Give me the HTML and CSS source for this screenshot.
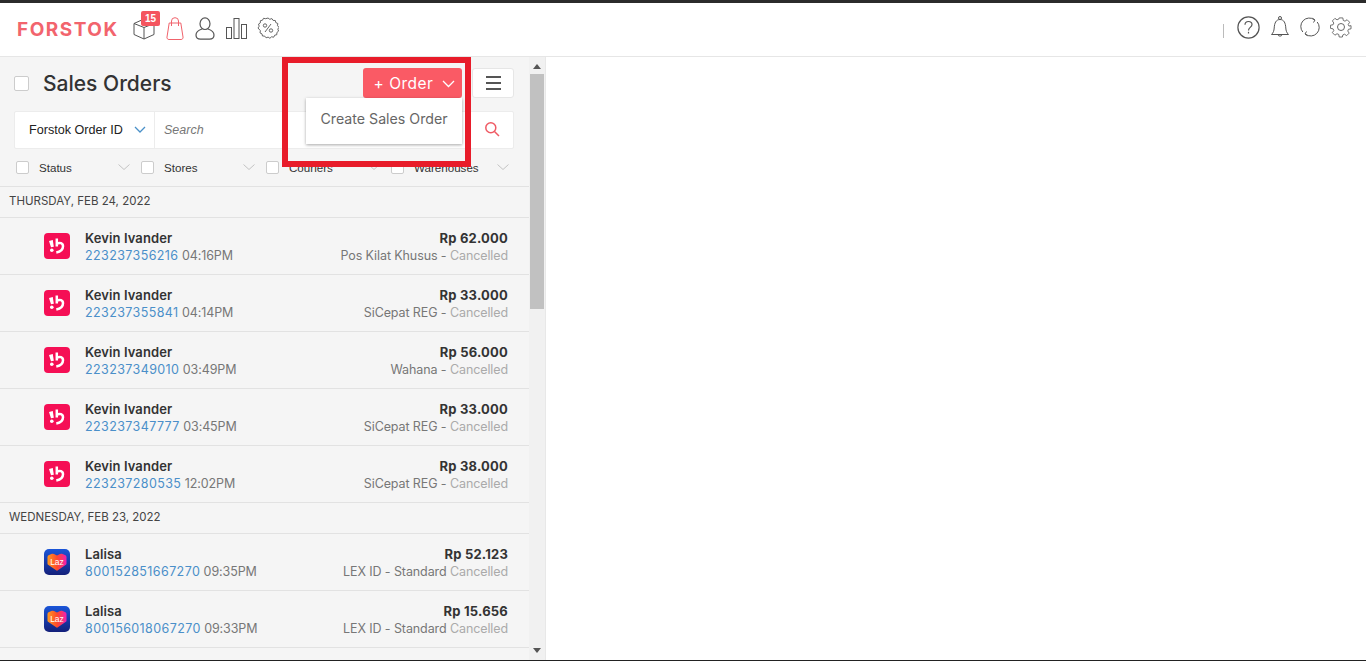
FILE: index.html
```html
<!DOCTYPE html>
<html lang="en">
<head>
<meta charset="utf-8">
<title>Forstok Sales Orders</title>
<link rel="stylesheet" href="styles.css">
</head>
<body>
<div class="page">
  <header class="topbar">
    <div class="brand">FORSTOK</div>
    <nav class="nav-left">
      <span class="nav-icon box-icon">
        <svg width="22" height="23" viewBox="0 0 22 23" fill="none" stroke="#555" stroke-width="1" stroke-linejoin="round"><path d="M1 6.500 11 2l10 4.500v11L11 22 1 17.500Z"/><path d="M1 6.500 11 10.500 21 6.500M11 10.500V22"/></svg>
        <span class="badge">15</span>
      </span>
      <svg class="nav-icon" width="18" height="23" viewBox="0 0 18 23" fill="none" stroke="#f0636c" stroke-width="1" stroke-linejoin="round"><path d="M3.200 6h11.600L17 20a2 2 0 0 1-2 2.500H3A2 2 0 0 1 1 20Z"/><path d="M5.500 9V4a3.500 3.300 0 0 1 7 0v5"/></svg>
      <svg class="nav-icon" width="20" height="23" viewBox="0 0 20 23" fill="none" stroke="#555" stroke-width="1.200"><ellipse cx="10" cy="6.700" rx="5" ry="5.800"/><path d="M7 12C2.500 13.500 1 15.500 1 18c0 2.700 1.800 4.200 4.500 4.200h9c2.700 0 4.500-1.500 4.500-4.200 0-2.500-1.500-4.500-6-6"/></svg>
      <svg class="nav-icon" width="21" height="21" viewBox="0 0 21 21" fill="none" stroke="#555" stroke-width="1"><rect x=".5" y="9.500" width="5" height="11"/><rect x="8" y=".5" width="5" height="20"/><rect x="15.500" y="6.500" width="5" height="14"/></svg>
      <svg class="nav-icon percent" width="22" height="22" viewBox="0 0 22 22" fill="none" stroke="#555" stroke-width=".9"><path d="M11 1l1.800 1.300 2.100-.7 1.200 1.800 2.200.1.500 2.100 2 .9-.3 2.200 1.500 1.600-1.200 1.800.8 2-1.700 1.400-.1 2.200-2.100.5-1 2-2.200-.4-1.600 1.500-1.800-1.200-2 .7-1.400-1.700-2.200-.1-.5-2.100-2-1 .4-2.200L1 11l1.200-1.800-.7-2.100 1.800-1.200.1-2.200 2.100-.5 1-1.900 2.200.4Z"/><path d="M14 7 8 15"/><circle cx="8" cy="8.500" r="1.700"/><circle cx="14" cy="13.500" r="1.700"/></svg>
    </nav>
    <div class="nav-right">
      <span class="divider"></span>
      <svg width="23" height="23" viewBox="0 0 23 23" fill="none" stroke="#555" stroke-width="1.200"><circle cx="11.500" cy="11.500" r="10.600"/><path d="M8 8.800C8 6.800 9.500 5.500 11.500 5.500s3.500 1.300 3.500 3.100c0 1.400-.9 2.100-1.800 2.800-1 .8-1.700 1.400-1.700 3"/><path d="M11.500 15.800v1.700"/></svg>
      <svg width="20" height="24" viewBox="0 0 20 24" fill="none" stroke="#555" stroke-width="1" stroke-linejoin="round"><path d="M1.500 19.500c1.800-1.800 2.500-3.500 2.700-6.500C4.500 8 6 4.500 10 4.500S15.500 8 15.800 13c.2 3 .9 4.700 2.700 6.500Z"/><circle cx="10" cy="3" r="1.500"/><path d="M7.800 19.500a2.300 2.300 0 0 0 4.400 0"/></svg>
      <svg width="20" height="20" viewBox="0 0 20 20" fill="none" stroke="#555" stroke-width="1"><path d="M2.800 15A8.500 8.500 0 0 1 14.500 2.800"/><path d="M17.200 5A8.500 8.500 0 0 1 5.500 17.200"/><path d="M12.500 1.300 15 3l-1.500 2.500"/><path d="M7.500 18.700 5 17l1.500-2.500"/></svg>
      <svg width="22" height="22" viewBox="0 0 22 22" fill="none" stroke="#555" stroke-width=".9"><path d="M9 1h4l.5 2.800 1.900.8 2.300-1.600 2.800 2.800-1.600 2.300.8 1.900L22 9.500v3.500l-2.800.5-.8 1.900 1.600 2.300-2.800 2.800-2.300-1.600-1.900.8L12.500 22h-3.500l-.5-2.800-1.900-.8-2.300 1.600-2.800-2.800 1.600-2.300-.8-1.900L-.5 12.500V9l2.800-.5.8-1.900L1.500 4.300 4.300 1.500l2.300 1.600 1.900-.8Z" transform="translate(1 1) scale(.91)"/><circle cx="11" cy="11" r="3.500"/></svg>
    </div>
  </header>

  <main class="content">
    <section class="panel">
      <div class="list-scroll">
        <div class="panel-head">
          <div class="title-row">
            <span class="check check-lg"></span>
            <h1>Sales Orders</h1>
            <button class="order-btn">+ Order <svg width="13" height="8" viewBox="0 0 13 8" fill="none" stroke="#fff" stroke-width="1.300"><path d="M1 1l5.500 5.500L12 1"/></svg></button>
            <button class="menu-btn"><span></span><span></span><span></span></button>
          </div>
          <div class="search-row">
            <div class="search-type">Forstok Order ID <svg width="12" height="7" viewBox="0 0 12 7" fill="none" stroke="#4a90c8" stroke-width="1.300"><path d="M1 1l5 5 5-5"/></svg></div>
            <div class="search-input">Search</div>
            <svg class="search-icon" width="16" height="16" viewBox="0 0 16 16" fill="none" stroke="#ef5a64" stroke-width="1.500"><circle cx="6.800" cy="6.800" r="5"/><path d="M10.500 10.500 15 15"/></svg>
          </div>
          <div class="filter-row">
            <div class="filter"><span class="check"></span><span class="filter-name">Status</span><svg class="chev" width="12" height="6" viewBox="0 0 12 6" fill="none" stroke="#c4c4c4"><path d="M.5.500l5.500 5 5.500-5"/></svg></div>
            <div class="filter"><span class="check"></span><span class="filter-name">Stores</span><svg class="chev" width="12" height="6" viewBox="0 0 12 6" fill="none" stroke="#c4c4c4"><path d="M.5.500l5.500 5 5.500-5"/></svg></div>
            <div class="filter"><span class="check"></span><span class="filter-name">Couriers</span><svg class="chev" width="12" height="6" viewBox="0 0 12 6" fill="none" stroke="#c4c4c4"><path d="M.5.500l5.500 5 5.500-5"/></svg></div>
            <div class="filter"><span class="check"></span><span class="filter-name">Warehouses</span><svg class="chev" width="12" height="6" viewBox="0 0 12 6" fill="none" stroke="#c4c4c4"><path d="M.5.500l5.500 5 5.500-5"/></svg></div>
          </div>
        </div>

        <div class="date-row">THURSDAY, FEB 24, 2022</div>
        <div class="order">
          <span class="logo"><svg width="26" height="26" viewBox="0 0 26 26"><rect width="26" height="26" rx="4" fill="#f50f55"/><circle cx="7.800" cy="17.200" r="1.800" fill="#fff"/><path d="M5 8l3.800-1 1 6.800-2.800.5Z" fill="#fff"/><path d="M12.800 5.500v8M12.800 10.500c3-1.300 6.200-.5 6.200 2.700 0 3.300-3.200 5.600-6.700 6.300" fill="none" stroke="#fff" stroke-width="2.500"/></svg></span>
          <div class="who"><div class="name">Kevin Ivander</div><div class="meta"><a>223237356216</a> 04:16PM</div></div>
          <div class="amount"><div class="price">Rp 62.000</div><div class="ship">Pos Kilat Khusus - <em>Cancelled</em></div></div>
        </div>
        <div class="order">
          <span class="logo"><svg width="26" height="26" viewBox="0 0 26 26"><rect width="26" height="26" rx="4" fill="#f50f55"/><circle cx="7.800" cy="17.200" r="1.800" fill="#fff"/><path d="M5 8l3.800-1 1 6.800-2.800.5Z" fill="#fff"/><path d="M12.800 5.500v8M12.800 10.500c3-1.300 6.200-.5 6.200 2.700 0 3.300-3.200 5.600-6.700 6.300" fill="none" stroke="#fff" stroke-width="2.500"/></svg></span>
          <div class="who"><div class="name">Kevin Ivander</div><div class="meta"><a>223237355841</a> 04:14PM</div></div>
          <div class="amount"><div class="price">Rp 33.000</div><div class="ship">SiCepat REG - <em>Cancelled</em></div></div>
        </div>
        <div class="order">
          <span class="logo"><svg width="26" height="26" viewBox="0 0 26 26"><rect width="26" height="26" rx="4" fill="#f50f55"/><circle cx="7.800" cy="17.200" r="1.800" fill="#fff"/><path d="M5 8l3.800-1 1 6.800-2.800.5Z" fill="#fff"/><path d="M12.800 5.500v8M12.800 10.500c3-1.300 6.200-.5 6.200 2.700 0 3.300-3.200 5.600-6.700 6.300" fill="none" stroke="#fff" stroke-width="2.500"/></svg></span>
          <div class="who"><div class="name">Kevin Ivander</div><div class="meta"><a>223237349010</a> 03:49PM</div></div>
          <div class="amount"><div class="price">Rp 56.000</div><div class="ship">Wahana - <em>Cancelled</em></div></div>
        </div>
        <div class="order">
          <span class="logo"><svg width="26" height="26" viewBox="0 0 26 26"><rect width="26" height="26" rx="4" fill="#f50f55"/><circle cx="7.800" cy="17.200" r="1.800" fill="#fff"/><path d="M5 8l3.800-1 1 6.800-2.800.5Z" fill="#fff"/><path d="M12.800 5.500v8M12.800 10.500c3-1.300 6.200-.5 6.200 2.700 0 3.300-3.200 5.600-6.700 6.300" fill="none" stroke="#fff" stroke-width="2.500"/></svg></span>
          <div class="who"><div class="name">Kevin Ivander</div><div class="meta"><a>223237347777</a> 03:45PM</div></div>
          <div class="amount"><div class="price">Rp 33.000</div><div class="ship">SiCepat REG - <em>Cancelled</em></div></div>
        </div>
        <div class="order">
          <span class="logo"><svg width="26" height="26" viewBox="0 0 26 26"><rect width="26" height="26" rx="4" fill="#f50f55"/><circle cx="7.800" cy="17.200" r="1.800" fill="#fff"/><path d="M5 8l3.800-1 1 6.800-2.800.5Z" fill="#fff"/><path d="M12.800 5.500v8M12.800 10.500c3-1.300 6.200-.5 6.200 2.700 0 3.300-3.200 5.600-6.700 6.300" fill="none" stroke="#fff" stroke-width="2.500"/></svg></span>
          <div class="who"><div class="name">Kevin Ivander</div><div class="meta"><a>223237280535</a> 12:02PM</div></div>
          <div class="amount"><div class="price">Rp 38.000</div><div class="ship">SiCepat REG - <em>Cancelled</em></div></div>
        </div>

        <div class="date-row">WEDNESDAY, FEB 23, 2022</div>
        <div class="order">
          <span class="logo"><svg width="26" height="26" viewBox="0 0 26 26"><defs><linearGradient id="lz1" x1="0" y1="0" x2="1" y2="0"><stop offset="0" stop-color="#ff9a1f"/><stop offset=".5" stop-color="#ff4a2a"/><stop offset="1" stop-color="#f01fb4"/></linearGradient><linearGradient id="lz2" x1="0" y1="0" x2="0" y2="1"><stop offset="0" stop-color="#1a55d8"/><stop offset="1" stop-color="#14207a"/></linearGradient></defs><rect width="26" height="26" rx="5" fill="url(#lz2)"/><path d="M3.500 8Q3.500 6.500 5 6L8 4.800Q9 4.500 10 5L13 6.500 16 5Q17 4.500 18 4.800L21 6Q22.500 6.500 22.500 8V14.500Q22.500 15.500 21.500 16L13.500 21.500Q13 21.800 12.500 21.500L4.500 16Q3.500 15.500 3.500 14.500Z" fill="url(#lz1)"/><text x="13" y="16" class="laz-text">Laz</text></svg></span>
          <div class="who"><div class="name">Lalisa</div><div class="meta"><a>800152851667270</a> 09:35PM</div></div>
          <div class="amount"><div class="price">Rp 52.123</div><div class="ship">LEX ID - Standard <em>Cancelled</em></div></div>
        </div>
        <div class="order">
          <span class="logo"><svg width="26" height="26" viewBox="0 0 26 26"><rect width="26" height="26" rx="5" fill="url(#lz2)"/><path d="M3.500 8Q3.500 6.500 5 6L8 4.800Q9 4.500 10 5L13 6.500 16 5Q17 4.500 18 4.800L21 6Q22.500 6.500 22.500 8V14.500Q22.500 15.500 21.500 16L13.500 21.500Q13 21.800 12.500 21.500L4.500 16Q3.500 15.500 3.500 14.500Z" fill="url(#lz1)"/><text x="13" y="16" class="laz-text">Laz</text></svg></span>
          <div class="who"><div class="name">Lalisa</div><div class="meta"><a>800156018067270</a> 09:33PM</div></div>
          <div class="amount"><div class="price">Rp 15.656</div><div class="ship">LEX ID - Standard <em>Cancelled</em></div></div>
        </div>
      </div>
      <div class="scrollbar">
        <span class="arrow arrow-up"></span>
        <span class="thumb"></span>
        <span class="arrow arrow-down"></span>
      </div>
      <div class="dropdown">Create Sales Order</div>
      <div class="highlight"></div>
    </section>
    <section class="detail"></section>
  </main>
</div>
</body>
</html>
```
FILE: styles.css
```css
* { box-sizing: border-box; }
html, body { margin: 0; height: 100%; }
body { font-family: "Inter", "Liberation Sans", sans-serif; color: #333; background: #fff; overflow: hidden; }
.page { height: 661px; display: flex; flex-direction: column; border-top: 3px solid #2b2b2b; border-bottom: 1px solid #222; }

.topbar { height: 54px; flex: none; display: flex; align-items: center; border-bottom: 1px solid #e6e6e6; padding: 0 14px 0 17px; background: #fff; }
.brand { font-family: "Inter", sans-serif; font-size: 19px; font-weight: 700; letter-spacing: 1.500px; color: #f2646d; width: 116px; flex: none; margin-top: -1px; }
.nav-left { display: flex; align-items: center; gap: 11px; margin-top: -3px; }
.nav-icon { display: block; flex: none; }
.percent { margin-left: -1px; }
.box-icon { position: relative; width: 22px; height: 23px; }
.box-icon svg { display: block; }
.badge { position: absolute; top: -6px; left: 8px; width: 19px; height: 15px; border-radius: 2px; background: #f4555f; color: #fff; font: 700 10px/15px "Liberation Sans", sans-serif; text-align: center; }
.nav-right { margin-left: auto; display: flex; align-items: center; gap: 10px; margin-top: -5px; }
.divider { width: 1px; height: 14px; background: #bbb; margin-right: 3px; margin-top: 8px; }

.content { flex: 1; min-height: 0; display: flex; }
.panel { position: relative; width: 546px; flex: none; display: flex; overflow: hidden; border-right: 1px solid #e8e8e8; }
.detail { flex: 1; background: #fff; }
.list-scroll { width: 529px; flex: none; background: #f5f5f5; }
.panel-head { height: 130px; padding: 11px 15px 0 14px; border-bottom: 1px solid #e2e2e2; }

.title-row { display: flex; align-items: center; height: 30px; }
.check { display: block; flex: none; width: 14px; height: 14px; border: 1px solid #ccc; border-radius: 2px; background: #fff; }
.check-lg { width: 15px; height: 15px; }
h1 { margin: 0 0 0 14px; font-size: 21px; font-weight: 500; color: #333; flex: 1; }
.order-btn { width: 99px; height: 30px; border: 0; border-radius: 3px; background: #fa5a65; color: #fff; font: 400 15.500px/28px "Inter", sans-serif; letter-spacing: .5px; display: flex; align-items: center; justify-content: center; gap: 9px; padding: 2px 0 0 4px; }
.menu-btn { width: 42px; height: 30px; margin-left: 10px; border: 1px solid #e6e6e6; border-radius: 3px; background: #fff; display: flex; flex-direction: column; align-items: center; justify-content: center; gap: 4px; padding: 0; }
.menu-btn span { display: block; width: 15px; height: 2px; background: #555; }

.search-row { margin-top: 13px; height: 38px; background: #fff; border: 1px solid #ececec; border-radius: 2px; display: flex; align-items: center; }
.search-type { width: 140px; height: 100%; border-right: 1px solid #ececec; font: 12.600px "Liberation Sans", sans-serif; color: #222; display: flex; align-items: center; gap: 11px; padding: 0 0 1px 14px; }
.search-input { flex: 1; font: italic 12.500px "Liberation Sans", sans-serif; color: #777; padding: 0 0 1px 9px; }
.search-icon { margin-right: 13px; margin-bottom: 2px; }

.filter-row { margin-top: 11px; display: grid; grid-template-columns: repeat(4, 125px); margin-left: 2px; }
.filter { display: flex; align-items: center; height: 14px; }
.filter .check { width: 13px; height: 13px; }
.filter-name { font: 11.600px "Liberation Sans", sans-serif; color: #333; margin-left: 10px; flex: 1; }
.chev { margin-right: 11px; }
.filter:last-child .chev { margin-right: 7px; }

.date-row { height: 31px; padding: 7px 0 0 9px; border-bottom: 1px solid #e2e2e2; font-size: 11.500px; line-height: 15px; color: #444; }
.order { height: 57px; display: flex; align-items: center; padding: 2px 21px 0 44px; border-bottom: 1px solid #e2e2e2; }
.logo { display: block; width: 26px; height: 26px; flex: none; margin-top: -3px; }
.logo svg { display: block; }
.laz-text { font: 400 8.500px "Liberation Sans", sans-serif; fill: #fff; text-anchor: middle; }
.who { margin-left: 15px; flex: 1; }
.name { font-size: 13px; line-height: 17px; font-weight: 600; color: #333; letter-spacing: .1px; }
.meta { font-size: 12.500px; line-height: 17px; color: #777; letter-spacing: -.1px; }
.meta a { color: #4a8fc9; letter-spacing: .4px; }
.amount { text-align: right; }
.price { font-size: 13px; line-height: 17px; font-weight: 700; color: #333; letter-spacing: .2px; }
.ship { font-size: 12.500px; line-height: 17px; color: #777; letter-spacing: -.1px; }
.ship em { font-style: normal; color: #aaa; }

.scrollbar { width: 16px; flex: none; background: #f1f1f1; display: flex; flex-direction: column; align-items: center; position: relative; }
.thumb { position: absolute; top: 17px; left: 1px; width: 14px; height: 235px; background: #c1c1c1; }
.arrow { width: 0; height: 0; border-left: 4px solid transparent; border-right: 4px solid transparent; }
.arrow-up { border-bottom: 5px solid #555; margin-top: 7px; }
.arrow-down { border-top: 5px solid #555; margin-top: auto; margin-bottom: 7px; }

.dropdown { position: absolute; left: 306px; top: 41px; width: 156px; height: 46px; background: #fff; box-shadow: 0 1px 3px rgba(0,0,0,.35); color: #666; font-size: 14.200px; line-height: 41px; text-align: center; }
.highlight { position: absolute; left: 282px; top: 0; width: 189px; height: 110px; border: 6px solid #e81c2a; }
```
